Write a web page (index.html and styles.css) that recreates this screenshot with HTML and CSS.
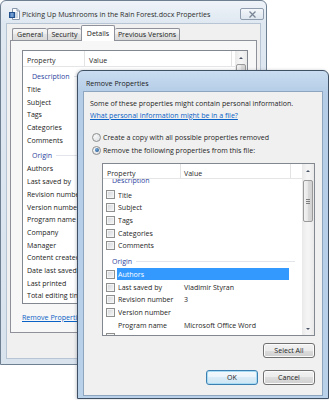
FILE: index.html
```html
<!DOCTYPE html>
<html>
<head>
<meta charset="utf-8">
<link rel="stylesheet" href="styles.css">
</head>
<body>
<div class="win back">
  <div class="titlebar">
    <svg class="appicon" width="11" height="12" viewBox="0 0 11 12">
      <path d="M3.5 .5h4.5l2.5 2.5v8.5h-7z" fill="#fdfdfd" stroke="#8796aa"/>
      <path d="M8 .5v2.5h2.5" fill="#e4ebf3" stroke="#8796aa"/>
      <path d="M5 5h4M5 7h4M5 9h4" stroke="#9fb3cc"/>
      <rect x="0.5" y="4.5" width="5" height="5" fill="#2f6ab5" stroke="#22508c"/>
      <path d="M1.5 6h3M1.5 8h3" stroke="#dbe8f7" stroke-width=".8"/>
    </svg>
    <span class="ttext">Picking Up Mushrooms in the Rain Forest.docx Properties</span>
    <span class="closebtn">
      <svg width="9" height="7" viewBox="0 0 9 7"><path d="M1.5 .5l6 6M7.5 .5l-6 6" stroke="#7a8696" stroke-width="1.3"/></svg>
    </span>
  </div>
  <div class="client">
    <div class="tabs">
      <span class="tab t-general">General</span>
      <span class="tab t-security">Security</span>
      <span class="tab t-details sel">Details</span>
      <span class="tab t-prev">Previous Versions</span>
    </div>
    <div class="panel">
      <div class="blist">
        <div class="bmain">
          <div class="bhead">
            <span class="bh1">Property</span>
            <span class="bh2">Value</span>
            <span class="bh3"></span>
          </div>
          <div class="bbody">
            <div class="grp"><span class="gname">Description</span><span class="gline"></span></div>
            <div class="brow">Title</div>
            <div class="brow">Subject</div>
            <div class="brow">Tags</div>
            <div class="brow">Categories</div>
            <div class="brow">Comments</div>
            <div class="grp"><span class="gname">Origin</span><span class="gline"></span></div>
            <div class="brow">Authors</div>
            <div class="brow">Last saved by</div>
            <div class="brow">Revision number</div>
            <div class="brow">Version number</div>
            <div class="brow">Program name</div>
            <div class="brow">Company</div>
            <div class="brow">Manager</div>
            <div class="brow">Content created</div>
            <div class="brow">Date last saved</div>
            <div class="brow">Last printed</div>
            <div class="brow">Total editing time</div>
          </div>
        </div>
        <div class="vscroll">
          <span class="sarrow up"></span>
          <span class="thumb bthumb"></span>
        </div>
      </div>
      <a class="link blink">Remove Properties and Personal Information</a>
    </div>
  </div>
</div>

<div class="win front">
  <div class="titlebar">
    <span class="ttext">Remove Properties</span>
  </div>
  <div class="dclient">
    <div class="line">Some of these properties might contain personal information.</div>
    <div class="line"><a class="link">What personal information might be in a file?</a></div>
    <div class="radios">
      <div class="radio"><span class="rdot"></span>Create a copy with all possible properties removed</div>
      <div class="radio on"><span class="rdot"></span>Remove the following properties from this file:</div>
    </div>
    <div class="plist">
      <div class="pmain">
        <div class="phead">
          <span class="ph1">Property</span>
          <span class="ph2">Value</span>
          <span class="ph3"></span>
        </div>
        <div class="pbody">
          <div class="pinner">
            <div class="grp pgrp first"><span class="gname">Description</span></div>
            <div class="prow"><span class="chk"></span><span class="pname">Title</span></div>
            <div class="prow"><span class="chk"></span><span class="pname">Subject</span></div>
            <div class="prow"><span class="chk"></span><span class="pname">Tags</span></div>
            <div class="prow"><span class="chk"></span><span class="pname">Categories</span></div>
            <div class="prow"><span class="chk"></span><span class="pname">Comments</span></div>
            <div class="grp pgrp"><span class="gname">Origin</span><span class="gline"></span></div>
            <div class="prow"><span class="chk"></span><span class="selbox"><span class="pname">Authors</span><span class="pval"></span></span></div>
            <div class="prow"><span class="chk"></span><span class="pname">Last saved by</span><span class="pval">Vladimir Styran</span></div>
            <div class="prow"><span class="chk"></span><span class="pname">Revision number</span><span class="pval">3</span></div>
            <div class="prow"><span class="chk"></span><span class="pname">Version number</span></div>
            <div class="prow"><span class="nochk"></span><span class="pname">Program name</span><span class="pval">Microsoft Office Word</span></div>
            <div class="prow"><span class="chk"></span><span class="pname">Company</span></div>
          </div>
        </div>
      </div>
      <div class="vscroll pscroll">
        <span class="sarrow up"></span>
        <span class="thumb pthumb"><span class="grip"></span></span>
        <span class="sarrow down"></span>
      </div>
    </div>
    <div class="btnrow r1">
      <span class="btn">Select All</span>
    </div>
    <div class="btnrow r2">
      <span class="btn def">OK</span>
      <span class="btn">Cancel</span>
    </div>
  </div>
</div>
</body>
</html>
```
FILE: styles.css
```css
html, body {
  margin: 0;
  padding: 0;
}
body {
  width: 329px;
  height: 400px;
  overflow: hidden;
  position: relative;
  background: #ffffff;
  font-family: "Open Sans", "Noto Sans", sans-serif;
  font-size: 7.05px;
  color: #1e1e1e;
}

/* ---------- windows ---------- */
.win {
  box-sizing: border-box;
  display: flex;
  flex-direction: column;
  border-radius: 6px 6px 0 0;
}
.titlebar {
  display: flex;
  align-items: center;
  white-space: nowrap;
  box-sizing: border-box;
}

/* background (inactive) properties window */
.back {
  width: 267px;
  height: 365px;
  border: 1px solid #6f7f92;
  background: linear-gradient(#eef3f8, #dfe8f1 22px, #d8e3ee);
  padding: 0 6px 6px;
}
.back .titlebar {
  height: 23px;
  margin: 0 -6px;
  padding: 3px 2px 0 8px;
  color: #2c2c2c;
}
.appicon {
  flex: none;
  margin-right: 2px;
}
.back .ttext {
  flex: 1;
}
.closebtn {
  flex: none;
  width: 24px;
  height: 12px;
  box-sizing: border-box;
  border: 1px solid #8f9cad;
  border-radius: 2px;
  background: linear-gradient(#f4f7fa, #dde5ee);
  display: flex;
  align-items: center;
  justify-content: center;
}
.back .client {
  flex: 1;
  background: #f0f0f0;
  box-shadow: 0 0 0 1px #b6c4d3;
  display: flex;
  flex-direction: column;
  color: #222;
}
.tabs {
  height: 16px;
  display: flex;
  align-items: flex-end;
  padding-left: 5px;
  position: relative;
  z-index: 1;
}
.tab {
  box-sizing: border-box;
  height: 12px;
  border: 1px solid #8e919a;
  border-bottom: 0;
  border-right: 0;
  background: linear-gradient(#f7f7f7, #ececec 50%, #e3e3e3 50%, #dadada);
  text-align: center;
  line-height: 11px;
  border-radius: 2px 2px 0 0;
}
.t-general { width: 35px; }
.t-security { width: 34px; }
.t-details {
  width: 34px;
  border-right: 1px solid #8e919a;
}
.t-prev {
  width: 65px;
  border-left: 0;
  border-right: 1px solid #8e919a;
}
.tab.sel {
  height: 16px;
  margin-bottom: -1px;
  background: #ffffff;
  line-height: 14px;
}
.panel {
  height: 293px;
  margin: 0 3px;
  box-sizing: border-box;
  border: 1px solid #8e919a;
  background: #f7f7f7;
  padding: 9px 9px 0 11px;
  display: flex;
  flex-direction: column;
  align-items: flex-start;
}
.blist {
  width: 226px;
  height: 254px;
  box-sizing: border-box;
  border: 1px solid #828790;
  background: #ffffff;
  display: flex;
  overflow: hidden;
}
.bmain {
  flex: 1;
  display: flex;
  flex-direction: column;
  overflow: hidden;
}
.bhead, .phead {
  display: flex;
  flex: none;
  box-sizing: border-box;
  border-bottom: 1px solid #e5e5e5;
  color: #2a2a2a;
  line-height: 12.7px;
  position: relative;
  z-index: 1;
  background: #ffffff;
}
.bhead {
  height: 16px;
  padding-top: 3px;
}
.bhead span, .phead span {
  box-sizing: border-box;
  border-right: 1px solid #e3e3e3;
  margin-top: -3px;
  padding-top: 3px;
}
.bh1 { width: 62px; padding-left: 4px; }
.bh2 { width: 147px; padding-left: 4px; }
.bh3 { flex: 1; border-right: 0 !important; }
.bbody {
  flex: 1;
  overflow: hidden;
}
.brow {
  height: 12.7px;
  line-height: 12.7px;
  padding-left: 4px;
  white-space: nowrap;
}
.grp {
  height: 16px;
  box-sizing: border-box;
  padding: 3px 0 0 9px;
  display: flex;
  align-items: flex-start;
  line-height: 12.7px;
  color: #2d3f9e;
}
.gname {
  flex: none;
}
.gline {
  flex: 1;
  height: 1px;
  margin: 6px 7px 0 4px;
  background: #e2e5ea;
}
.link {
  color: #0b62c6;
  text-decoration: underline;
  cursor: pointer;
  white-space: nowrap;
}
.blink {
  margin-top: 7px;
  line-height: 12px;
}

/* scrollbars */
.vscroll {
  width: 12px;
  flex: none;
  background: linear-gradient(90deg, #e9e9e9, #f4f4f4 40%, #f4f4f4 60%, #e9e9e9);
  display: flex;
  flex-direction: column;
  align-items: center;
  position: relative;
}
.sarrow {
  width: 0;
  height: 0;
  border-left: 2.5px solid transparent;
  border-right: 2.5px solid transparent;
}
.sarrow.up {
  border-bottom: 2.5px solid #4a5568;
  margin-top: 6px;
}
.sarrow.down {
  border-top: 2.5px solid #4a5568;
  margin-top: auto;
  margin-bottom: 5px;
}
.thumb {
  width: 10px;
  box-sizing: border-box;
  border: 1px solid #9a9a9a;
  border-radius: 2px;
  background: linear-gradient(90deg, #f3f3f3, #e6e6e6 50%, #d9d9d9 50%, #d2d2d2);
  display: flex;
  align-items: center;
  justify-content: center;
}
.bthumb {
  margin-top: 5px;
  height: 40px;
}
.pthumb {
  margin-top: 8px;
  height: 42px;
}
.grip {
  width: 4px;
  height: 5px;
  background: repeating-linear-gradient(#7e7e7e 0 1px, transparent 1px 2px);
}

/* front (active) dialog */
.front {
  position: absolute;
  left: 77px;
  top: 70px;
  width: 252px;
  height: 329px;
  border: 1px solid #3f5064;
  background: linear-gradient(#c9dcf0, #b5cde7 21px, #bad1ea);
  padding: 0 6px 3px;
  box-shadow: -1px 0 3px rgba(40, 50, 70, 0.25);
}
.front .titlebar {
  height: 21px;
  padding: 2px 0 0 2px;
  color: #1a1a1a;
}
.dclient {
  flex: 1;
  background: #f0f0f0;
  box-shadow: 0 0 0 1px #8ea5bf;
  padding: 5px 7px 0 6px;
  display: flex;
  flex-direction: column;
}
.line {
  line-height: 12px;
  white-space: nowrap;
}
.radios {
  margin-top: 10px;
  display: flex;
  flex-direction: column;
  gap: 1px;
  padding-left: 2px;
}
.radio {
  display: flex;
  align-items: center;
  height: 12px;
  line-height: 12px;
  white-space: nowrap;
}
.rdot {
  width: 9px;
  height: 9px;
  box-sizing: border-box;
  border: 1px solid #8e8f8f;
  border-radius: 50%;
  background: radial-gradient(circle at 35% 35%, #f8f8f8, #d8dbe0);
  margin-right: 2px;
  display: flex;
  align-items: center;
  justify-content: center;
}
.radio.on .rdot::after {
  content: "";
  width: 4px;
  height: 4px;
  border-radius: 50%;
  background: radial-gradient(circle at 40% 35%, #6ea3d6, #1c4f86);
}
.plist {
  margin: 7px 0 0 12px;
  height: 173px;
  box-sizing: border-box;
  border: 1px solid #828790;
  background: #ffffff;
  display: flex;
  overflow: hidden;
}
.pmain {
  flex: 1;
  display: flex;
  flex-direction: column;
  overflow: hidden;
}
.phead {
  height: 15px;
  padding-top: 3px;
}
.ph1 { width: 78px; padding-left: 4px; }
.ph2 { width: 110px; padding-left: 3px; }
.ph3 { flex: 1; border-right: 0 !important; }
.pbody {
  flex: 1;
  overflow: hidden;
}
.pinner {
  margin-top: -8.4px;
}
.pgrp {
  padding-left: 9px;
}
.pgrp.first {
  height: 18px;
}
.prow {
  height: 12.7px;
  display: flex;
  align-items: center;
  line-height: 12.7px;
  white-space: nowrap;
}
.chk, .nochk {
  flex: none;
  width: 9px;
  height: 9px;
  margin: 0 3px 0 3px;
  box-sizing: border-box;
}
.chk {
  border: 1px solid #8e8f8f;
  background: linear-gradient(135deg, #d2d5da, #f7f7f7);
  box-shadow: inset 0 0 0 1px #f4f4f4;
}
.pname {
  flex: none;
  width: 63px;
  overflow: hidden;
}
.pval {
  flex: none;
  padding-left: 3px;
}
.selbox {
  display: flex;
  width: 172px;
  height: 12px;
  margin-left: -1px;
  padding-left: 1px;
  box-sizing: border-box;
  background: #3399ff;
  color: #ffffff;
  line-height: 12px;
}
.pscroll {
  width: 12px;
}
.btnrow {
  display: flex;
  justify-content: flex-end;
  gap: 5px;
}
.r1 { margin-top: 7px; }
.r2 { margin-top: 12px; }
.btn {
  width: 52px;
  height: 15px;
  box-sizing: border-box;
  border: 1px solid #707070;
  border-radius: 3px;
  background: linear-gradient(#f2f2f2, #ebebeb 50%, #dddddd 50%, #cfcfcf);
  box-shadow: inset 0 0 0 1px #fbfbfb;
  text-align: center;
  line-height: 13px;
  color: #1e1e1e;
}
.btn.def {
  border-color: #3c7fb1;
  box-shadow: inset 0 0 0 1px #a8dcf5;
  background: linear-gradient(#f4f9fc, #eaf4fa 50%, #d9ecf7 50%, #cfe6f4);
}
```
